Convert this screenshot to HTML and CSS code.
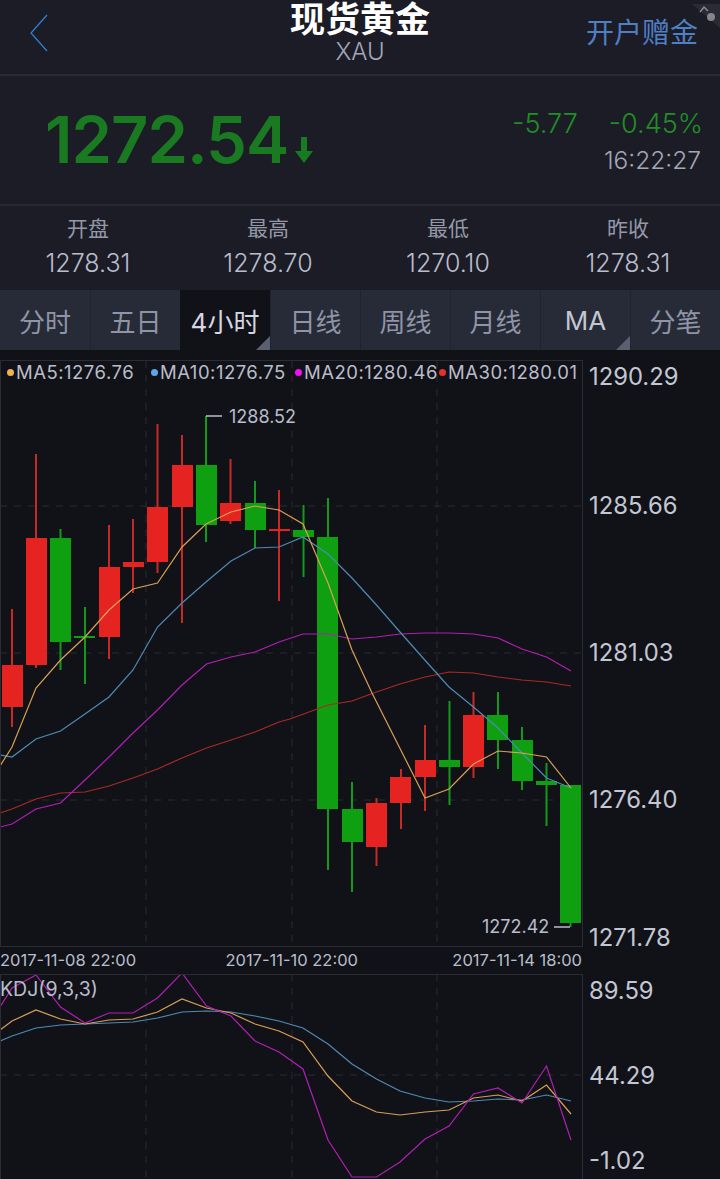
FILE: index.html
```html
<!DOCTYPE html>
<html>
    <head>
        <title>现货黄金</title>
        <meta charset="utf-8">
        <link rel="stylesheet" href="styles.css">
    </head>
    <body>
        <div class="header">
            <svg class="back" width="20" height="38" viewBox="0 0 20 38"><path d="M18 1 L2 19 L18 37" fill="none" stroke="#2f7fd0" stroke-width="1.3"/></svg>
            <div class="title">
                <div class="title-main">现货黄金</div>
                <div class="title-sub">XAU</div>
            </div>
            <div class="open-link">开户赠金</div>
            <svg class="corner" width="28" height="24" viewBox="0 0 28 24">
                <polygon points="0,0 28,0 28,24" fill="#2a2b35"/>
                <path d="M8 8 L12 3 L16 7" fill="none" stroke="#8a8b92" stroke-width="1.5"/>
                <circle cx="19" cy="13" r="4" fill="#85868c"/>
            </svg>
        </div>
        <div class="quote">
            <div class="price">1272.54<svg class="arrow" width="18" height="26" viewBox="0 0 18 26"><path d="M6 0 H12 V14 H18 L9 26 L0 14 H6 Z" fill="#1a7a22"/></svg></div>
            <div class="quote-right">
                <div class="change"><span>-5.77</span><span>-0.45%</span></div>
                <div class="time">16:22:27</div>
            </div>
        </div>
        <div class="stats">
            <div class="stat"><div class="stat-label">开盘</div><div class="stat-value">1278.31</div></div>
            <div class="stat"><div class="stat-label">最高</div><div class="stat-value">1278.70</div></div>
            <div class="stat"><div class="stat-label">最低</div><div class="stat-value">1270.10</div></div>
            <div class="stat"><div class="stat-label">昨收</div><div class="stat-value">1278.31</div></div>
        </div>
        <div class="tabs">
            <div class="tab">分时</div>
            <div class="tab">五日</div>
            <div class="tab active more">4小时</div>
            <div class="tab">日线</div>
            <div class="tab">周线</div>
            <div class="tab">月线</div>
            <div class="tab ma more">MA</div>
            <div class="tab">分笔</div>
        </div>
        <div class="charts">
            <div class="chart-row main-row">
                <div class="plot main-plot">
                    <svg class="plot-svg" width="581" height="585" viewBox="1 361 581 585">
                        <g class="grid">
                            <path d="M0 506 H582 M0 653 H582 M0 800 H582 M146 361 V946 M292 361 V946 M437 361 V946"/>
                        </g>
                        <g class="wick-red">
                            <path d="M12 609 V727 M36 454 V668 M109 525 V659 M133 519 V593 M157.500 424 V573 M182 435 V623 M230.500 459 V524 M279 490 V601 M376.500 798 V866 M401 769 V829 M425 725 V811 M473.500 692 V778"/>
                        </g>
                        <g class="wick-green">
                            <path d="M60.500 529 V670 M85 607 V684 M206 416 V542 M255 481 V548 M303.500 505 V577 M328 498 V870 M352 782 V892 M449.500 701 V805 M498 692 V769 M522 727 V790 M546.500 763 V826 M570.500 923 V927"/>
                        </g>
                        <g class="body-red">
                            <rect x="2" y="665" width="21" height="42"/>
                            <rect x="26" y="538" width="21" height="127"/>
                            <rect x="99" y="567" width="21" height="70"/>
                            <rect x="123" y="562" width="21" height="5"/>
                            <rect x="147" y="507" width="21" height="55"/>
                            <rect x="172" y="465" width="21" height="42"/>
                            <rect x="220" y="503" width="21" height="18"/>
                            <rect x="269" y="529" width="21" height="2"/>
                            <rect x="366" y="803" width="21" height="44"/>
                            <rect x="390" y="777" width="21" height="26"/>
                            <rect x="415" y="760" width="21" height="17"/>
                            <rect x="463" y="715" width="21" height="52"/>
                        </g>
                        <g class="body-green">
                            <rect x="50" y="538" width="21" height="104"/>
                            <rect x="74" y="636" width="21" height="2"/>
                            <rect x="196" y="465" width="21" height="60"/>
                            <rect x="245" y="503" width="21" height="27"/>
                            <rect x="293" y="530" width="21" height="7"/>
                            <rect x="317" y="537" width="21" height="272"/>
                            <rect x="342" y="809" width="21" height="33"/>
                            <rect x="439" y="760" width="21" height="7"/>
                            <rect x="487" y="715" width="21" height="25"/>
                            <rect x="512" y="740" width="21" height="41"/>
                            <rect x="536" y="781" width="21" height="4"/>
                            <rect x="560" y="785" width="21" height="138"/>
                        </g>
                        <polyline class="line red" points="0,813 12,809 36,799 60.500,793 85,792 109,786 133,778 157.500,769 182,758 206.500,748 231,740 255,732 279,722 290,719 328,705 352,701 376.500,692 400,684 425,677 449,672 473.500,673 498,677 522,680 546.500,682 571,686"/>
                        <polyline class="line magenta" points="0,827 12,824 36,809 60.500,803 85,780 109,757 133,733 157.500,710 182,685 206.500,664 231,657 255,652 279,642 303,634 328,634 352,639 376.500,637 400,634 425,633 449,633 473.500,634 498,638 522,649 546.500,657 571,671"/>
                        <polyline class="line blue" points="0,755 12,757 36,739 60.500,731 85,714 109,697 133,670 157.500,627 182,603 206,582 231,561 255,548 279,547 303,537 328,554 352,578 376.500,605 400,632 423,658 449,687 473.500,707 498,728 522,753 546.500,778 571,788"/>
                        <polyline class="line orange" points="0,766 12,747 36,688 60.500,660 85,637 109,610 133,589 157.500,583 182,547 206,524 231,512 255,506 279,510 303,524 328,583 352,650 372,693 425,798 449,789 473.500,764 498,751 522,753 546.500,757 571,788"/>
                        <path class="mark" d="M206 416 H222 M554 927 H570"/>
                    </svg>
                    <div class="legend">
                        <span class="legend-item"><i class="dot dot-orange"></i>MA5:1276.76</span>
                        <span class="legend-item"><i class="dot dot-blue"></i>MA10:1276.75</span>
                        <span class="legend-item"><i class="dot dot-magenta"></i>MA20:1280.46</span>
                        <span class="legend-item"><i class="dot dot-red"></i>MA30:1280.01</span>
                    </div>
                    <div class="label-high">1288.52</div>
                    <div class="label-low">1272.42</div>
                </div>
                <div class="axis main-axis">
                    <span>1290.29</span>
                    <span>1285.66</span>
                    <span>1281.03</span>
                    <span>1276.40</span>
                    <span>1271.78</span>
                </div>
            </div>
            <div class="dates">
                <span>2017-11-08 22:00</span>
                <span class="date-mid">2017-11-10 22:00</span>
                <span>2017-11-14 18:00</span>
            </div>
            <div class="chart-row kdj-row">
                <div class="plot kdj-plot">
                    <svg class="plot-svg" width="581" height="204" viewBox="1 975 581 204">
                        <g class="grid">
                            <path d="M0 1075 H582 M146 974 V1178 M292 974 V1178 M437 974 V1178"/>
                        </g>
                        <polyline class="line blue" points="0,1041 12,1036 36,1028 60.500,1025 85,1024 109,1023 133,1022 157.500,1018 182,1012 206.500,1011 231,1012 255,1016 279,1021 303,1028 328,1044 352,1064 376.500,1079 400,1091 425,1098 449,1102 473.500,1101 498,1099 522,1100 546.500,1095 571,1101"/>
                        <polyline class="line orange" points="0,1030 12,1021 36,1010 60.500,1019 85,1024 109,1020 133,1019 157.500,1012 182,999 206.500,1008 231,1013 255,1024 279,1031 303,1042 328,1076 352,1101 376.500,1112 400,1115 425,1112 449,1110 473.500,1098 498,1095 522,1101 546.500,1085 571,1114"/>
                        <polyline class="line magenta" points="0,1007 12,988 36,975 60.500,1007 85,1023 109,1013 133,1013 157.500,998 182,973 206.500,1006 231,1016 255,1041 279,1052 303,1069 328,1140 352,1177 376.500,1177 400,1162 425,1139 449,1126 473.500,1094 498,1088 522,1103 546.500,1066 571,1140"/>
                    </svg>
                    <div class="kdj-label">KDJ(9,3,3)</div>
                </div>
                <div class="axis kdj-axis">
                    <span>89.59</span>
                    <span>44.29</span>
                    <span>-1.02</span>
                </div>
            </div>
        </div>
    </body>
</html>
```

FILE: styles.css
```css
html, body
{
    margin: 0;
    padding: 0;
}
body
{
    width: 720px;
    height: 1179px;
    overflow: hidden;
    background-color: #111217;
    font-family: "Inter", "Noto Sans CJK SC", sans-serif;
}
.header
{
    position: relative;
    height: 74px;
    display: flex;
    justify-content: center;
    background-color: #1b1c25;
    border-bottom: 2px solid #2a2b35;
}
.back
{
    position: absolute;
    left: 29px;
    top: 14px;
}
.title
{
    text-align: center;
}
.title-main
{
    font-size: 35px;
    line-height: 38px;
    font-weight: bold;
    color: #ffffff;
}
.title-sub
{
    margin-top: 1px;
    font-size: 24px;
    line-height: 26px;
    font-weight: 300;
    color: #a3a7b8;
}
.open-link
{
    position: absolute;
    right: 22px;
    top: 15px;
    font-size: 28px;
    line-height: 36px;
    color: #4f7fc4;
}
.corner
{
    position: absolute;
    right: 0;
    top: 4px;
}
.quote
{
    height: 128px;
    padding: 0 17px 0 45px;
    display: flex;
    justify-content: space-between;
    align-items: center;
    background-color: #1b1c25;
    border-bottom: 2px solid #272832;
}
.price
{
    display: flex;
    align-items: flex-end;
    gap: 7px;
    font-size: 65px;
    line-height: 76px;
    font-weight: 600;
    letter-spacing: -1px;
    color: #1a7a22;
}
.arrow
{
    margin-bottom: 15px;
}
.quote-right
{
    margin-top: 2px;
    text-align: right;
}
.change
{
    display: flex;
    gap: 31px;
    font-size: 27px;
    line-height: 34px;
    font-weight: 300;
    color: #1f8f25;
}
.time
{
    margin-top: 4px;
    margin-right: 2px;
    font-size: 24.500px;
    line-height: 30px;
    font-weight: 300;
    color: #a3a7b8;
}
.stats
{
    height: 84px;
    display: grid;
    grid-template-columns: repeat(4, 180px);
    margin-left: -2px;
    background-color: #1b1c25;
    text-align: center;
}
.stat-label
{
    margin-top: 10px;
    font-size: 21px;
    line-height: 26px;
    color: #9498a8;
}
.stat-value
{
    margin-top: 6px;
    font-size: 25px;
    line-height: 30px;
    font-weight: 300;
    color: #b9bdcc;
}
.tabs
{
    height: 60px;
    display: grid;
    grid-template-columns: repeat(8, 1fr);
    background-color: #262b37;
    border-bottom: 1px solid #111217;
}
.tab
{
    position: relative;
    display: flex;
    align-items: center;
    justify-content: center;
    font-size: 26px;
    color: #8f94a6;
    border-left: 1px solid #20242e;
}
.tab:first-child
{
    border-left: none;
}
.active
{
    background-color: #111217;
    color: #d5d8e2;
    border-left: none;
}
.ma
{
    color: #c3c7d4;
}
.more:after
{
    content: "";
    position: absolute;
    right: 0;
    bottom: 0;
    width: 0;
    height: 0;
    border-bottom: 14px solid #5a6070;
    border-left: 14px solid transparent;
}
.charts
{
    padding-top: 9px;
}
.chart-row
{
    display: flex;
}
.plot
{
    position: relative;
    width: 581px;
    border: 1px solid #2b2c33;
    flex-shrink: 0;
}
.main-plot
{
    height: 585px;
}
.kdj-plot
{
    height: 204px;
    border-bottom: none;
}
.plot-svg
{
    display: block;
}
.grid path
{
    fill: none;
    stroke: #2a2b31;
    stroke-width: 1;
    stroke-dasharray: 7 7;
}
.wick-red path
{
    fill: none;
    stroke: #c72a26;
    stroke-width: 2;
}
.wick-green path
{
    fill: none;
    stroke: #119a1c;
    stroke-width: 2;
}
.body-red rect
{
    fill: #e52421;
}
.body-green rect
{
    fill: #0fa012;
}
.line
{
    fill: none;
    stroke-width: 1.2;
}
.orange
{
    stroke: #d9a055;
}
.blue
{
    stroke: #4f8ab5;
}
.magenta
{
    stroke: #b01fb4;
}
.red
{
    stroke: #a82a28;
}
.mark
{
    fill: none;
    stroke: #b9bdcc;
    stroke-width: 1.5;
}
.legend
{
    position: absolute;
    left: 6px;
    top: -1px;
    display: grid;
    grid-template-columns: repeat(4, 144px);
    font-size: 18.500px;
    letter-spacing: 0.5px;
    line-height: 24px;
    color: #b9bdcc;
    white-space: nowrap;
}
.legend-item
{
    display: flex;
    align-items: center;
    gap: 2px;
}
.dot
{
    width: 7px;
    height: 7px;
    border-radius: 50%;
}
.dot-orange
{
    background-color: #f3b04f;
}
.dot-blue
{
    background-color: #5aa9ef;
}
.dot-magenta
{
    background-color: #f011f0;
}
.dot-red
{
    background-color: #e5302b;
}
.label-high
{
    position: absolute;
    left: 228px;
    top: 45px;
    font-size: 18px;
    line-height: 22px;
    color: #b9bdcc;
}
.label-low
{
    position: absolute;
    left: 481px;
    top: 555px;
    font-size: 18px;
    line-height: 22px;
    color: #b9bdcc;
}
.kdj-label
{
    position: absolute;
    left: -1px;
    top: 2px;
    font-size: 19.500px;
    line-height: 24px;
    color: #b9bdcc;
}
.axis
{
    flex: 1;
    display: grid;
    padding: 2px 0 0 6px;
    font-size: 23.800px;
    line-height: 30px;
    color: #c3c7d4;
}
.main-axis
{
    height: 585px;
    grid-template-rows: 129px 147px 147px 138px 30px;
}
.kdj-axis
{
    height: 202px;
    grid-template-rows: 85px 85px 30px;
}
.dates
{
    height: 27px;
    display: flex;
    justify-content: space-between;
    width: 582px;
    font-size: 16.500px;
    line-height: 27px;
    color: #b9bdcc;
}
.date-mid
{
    margin-right: 5px;
}
```
